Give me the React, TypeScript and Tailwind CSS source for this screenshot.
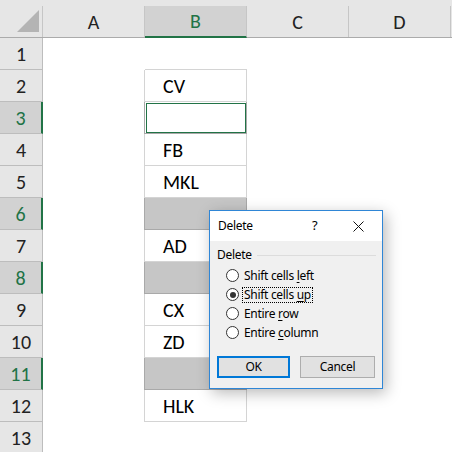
const rows = [
  { n: 1, text: "", kind: "top" },
  { n: 2, text: "CV", kind: "plain" },
  { n: 3, text: "", kind: "active" },
  { n: 4, text: "FB", kind: "plain" },
  { n: 5, text: "MKL", kind: "plain" },
  { n: 6, text: "", kind: "grey" },
  { n: 7, text: "AD", kind: "plain" },
  { n: 8, text: "", kind: "grey" },
  { n: 9, text: "CX", kind: "plain" },
  { n: 10, text: "ZD", kind: "plain" },
  { n: 11, text: "", kind: "grey" },
  { n: 12, text: "HLK", kind: "plain" },
  { n: 13, text: "", kind: "none" },
];

const selectedRows = [3, 6, 8, 11];

const sheetFont = { fontFamily: "Carlito, Lato, 'Liberation Sans', sans-serif" };
const uiFont = { fontFamily: "'Noto Sans', 'Open Sans', sans-serif" };

const Radio = ({ checked }: { checked?: boolean }) => (
  <span className="flex h-[13px] w-[13px] items-center justify-center rounded-full border border-[#333333] bg-white">
    {checked ? <span className="h-[6px] w-[6px] rounded-full bg-[#333333]" /> : null}
  </span>
);

const BCell = ({ text, kind }: { text: string; kind: string }) => {
  if (kind === "top") return <div className="h-full w-[102px] border-b border-[#d4d4d4]" />;
  if (kind === "none") return <div className="h-full w-[102px]" />;
  if (kind === "grey")
    return (
      <div className="h-full w-[103px] border-x border-b border-[#a9a9a9] bg-[#c6c6c6] -ml-px" />
    );
  if (kind === "active")
    return (
      <div className="flex h-full w-[103px] -ml-px border-x border-b border-[#a9a9a9] bg-white">
        <div className="mb-0 ml-px mt-px flex-1 border border-[#217346]" />
      </div>
    );
  return (
    <div className="flex h-full w-[103px] -ml-px items-center border-x border-b border-[#d4d4d4] pl-[18px] text-[20px] text-black">
      {text}
    </div>
  );
};

const DeleteDialog = () => (
  <div
    className="absolute left-[209px] top-[210px] flex h-[179px] w-[174px] flex-col border border-[#2f86d6] bg-[#f0f0f0] text-[12px] tracking-[-0.3px] text-black shadow-[3px_4px_14px_rgba(0,0,0,0.28)]"
    style={uiFont}
  >
    <div className="flex h-[30px] items-center bg-white pl-[8px]">
      <span className="flex-1">Delete</span>
      <span className="w-[12px] text-[13px]">?</span>
      <svg className="ml-[29px] mr-[18px]" width="11" height="11" viewBox="0 0 11 11">
        <path d="M0.5 0.5 L10.5 10.5 M10.5 0.5 L0.5 10.5" stroke="#111" strokeWidth="1" />
      </svg>
    </div>
    <div className="mt-[7px] flex h-[14px] items-center pl-[7px] pr-[6px] leading-[14px]">
      <span>Delete</span>
      <span className="ml-[5px] h-px flex-1 bg-[#dcdcdc]" />
    </div>
    <div className="mt-[4px] flex flex-col pl-[16px]">
      <div className="flex h-[19px] items-center gap-[3px]">
        <Radio />
        <span className="border border-transparent px-px">
          Shift cells <u className="underline-offset-2">l</u>eft
        </span>
      </div>
      <div className="flex h-[19px] items-center gap-[3px]">
        <Radio checked />
        <span className="border border-dotted border-black px-px leading-[14px]">
          Shift cells <u className="underline-offset-2">u</u>p
        </span>
      </div>
      <div className="flex h-[19px] items-center gap-[3px]">
        <Radio />
        <span className="border border-transparent px-px">
          Entire <u className="underline-offset-2">r</u>ow
        </span>
      </div>
      <div className="flex h-[19px] items-center gap-[3px]">
        <Radio />
        <span className="border border-transparent px-px">
          Entire <u className="underline-offset-2">c</u>olumn
        </span>
      </div>
    </div>
    <div className="mt-[14px] flex gap-[10px] pl-[7px]">
      <button className="h-[22px] w-[73px] border-2 border-[#0078d7] bg-[#e1e1e1]">OK</button>
      <button className="h-[22px] w-[75px] border border-[#adadad] bg-[#e1e1e1]">Cancel</button>
    </div>
  </div>
);

export default function App() {
  return (
    <div className="relative h-[452px] w-[452px] overflow-hidden bg-white" style={sheetFont}>
      <div className="flex h-[38px] flex-col border-b border-[#ababab] bg-[#e6e6e6]">
        <div className="h-[8px]" />
        <div className="flex flex-1">
          <div className="relative w-[43px] border-r border-[#c6c6c6]">
            <svg className="absolute left-[17px] top-[4px]" width="22" height="22" viewBox="0 0 22 22">
              <polygon points="22,0 22,22 0,22" fill="#b4b4b4" />
            </svg>
          </div>
          {["A", "B", "C", "D"].map((col) => (
            <div
              key={col}
              className={
                col === "B"
                  ? "flex w-[102px] items-center justify-center border-r border-b-2 border-r-[#c6c6c6] border-b-[#217346] bg-[#d2d2d2] text-[20px] text-[#217346] -mb-px"
                  : "flex w-[102px] items-center justify-center border-r border-[#c6c6c6] text-[20px] text-[#222]"
              }
            >
              {col}
            </div>
          ))}
        </div>
      </div>
      {rows.map((row) => {
        const sel = selectedRows.includes(row.n);
        return (
          <div key={row.n} className="flex h-[32px]">
            <div
              className={
                sel
                  ? "flex w-[43px] items-center justify-center border-b border-r-2 border-b-[#bdbdbd] border-r-[#217346] bg-[#d2d2d2] text-[20px] text-[#217346]"
                  : "flex w-[43px] items-center justify-center border-b border-r border-[#bdbdbd] bg-[#e6e6e6] text-[20px] text-[#222]"
              }
            >
              {row.n}
            </div>
            <div className="w-[102px]" />
            <BCell text={row.text} kind={row.kind} />
          </div>
        );
      })}
      <DeleteDialog />
    </div>
  );
}
